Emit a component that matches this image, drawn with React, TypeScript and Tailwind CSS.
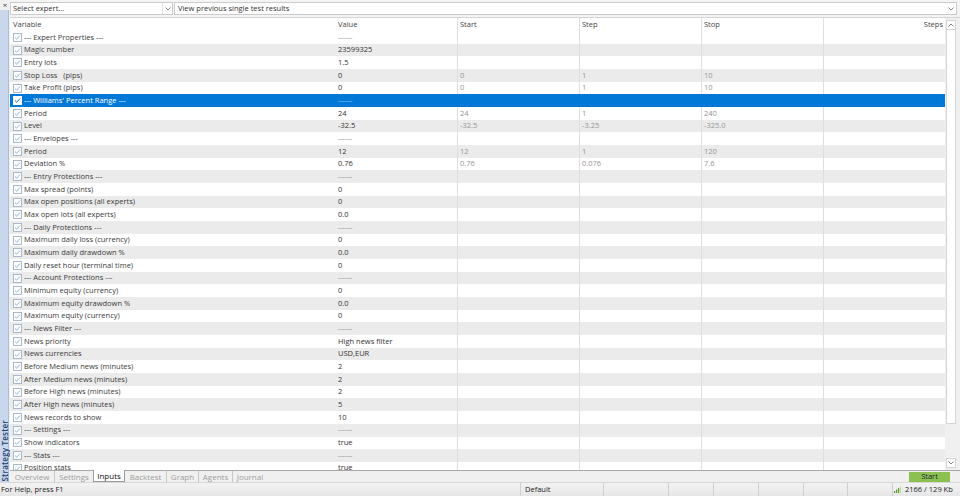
import React from "react";

type Row = { l: string; v: string; a?: string; s?: string; o?: string };

const rows: Row[] = [
  { l: "--- Expert Properties ---", v: "------" },
  { l: "Magic number", v: "23599325" },
  { l: "Entry lots", v: "1.5" },
  { l: "Stop Loss   (pips)", v: "0", a: "0", s: "1", o: "10" },
  { l: "Take Profit (pips)", v: "0", a: "0", s: "1", o: "10" },
  { l: "--- Williams' Percent Range ---", v: "------" },
  { l: "Period", v: "24", a: "24", s: "1", o: "240" },
  { l: "Level", v: "-32.5", a: "-32.5", s: "-3.25", o: "-325.0" },
  { l: "--- Envelopes ---", v: "------" },
  { l: "Period", v: "12", a: "12", s: "1", o: "120" },
  { l: "Deviation %", v: "0.76", a: "0.76", s: "0.076", o: "7.6" },
  { l: "--- Entry Protections ---", v: "------" },
  { l: "Max spread (points)", v: "0" },
  { l: "Max open positions (all experts)", v: "0" },
  { l: "Max open lots (all experts)", v: "0.0" },
  { l: "--- Daily Protections ---", v: "------" },
  { l: "Maximum daily loss (currency)", v: "0" },
  { l: "Maximum daily drawdown %", v: "0.0" },
  { l: "Daily reset hour (terminal time)", v: "0" },
  { l: "--- Account Protections ---", v: "------" },
  { l: "Minimum equity (currency)", v: "0" },
  { l: "Maximum equity drawdown %", v: "0.0" },
  { l: "Maximum equity (currency)", v: "0" },
  { l: "--- News Filter ---", v: "------" },
  { l: "News priority", v: "High news filter" },
  { l: "News currencies", v: "USD,EUR" },
  { l: "Before Medium news (minutes)", v: "2" },
  { l: "After Medium news (minutes)", v: "2" },
  { l: "Before High news (minutes)", v: "2" },
  { l: "After High news (minutes)", v: "5" },
  { l: "News records to show", v: "10" },
  { l: "--- Settings ---", v: "------" },
  { l: "Show indicators", v: "true" },
  { l: "--- Stats ---", v: "------" },
  { l: "Position stats", v: "true" },
];

function Check({ sel }: { sel: boolean }) {
  return (
    <svg width="9" height="9" viewBox="0 0 9 9" className="shrink-0">
      <rect x="0.5" y="0.5" width="8" height="8" fill="#ffffff" stroke={sel ? "#ffffff" : "#a6b8cf"} />
      <polyline points="2,4.6 3.7,6.2 7,2.6" fill="none" stroke={sel ? "#0a6fc6" : "#8fb2da"} strokeWidth="1" />
    </svg>
  );
}

function Chevron({ up }: { up?: boolean }) {
  return (
    <svg width="6" height="4" viewBox="0 0 6 4">
      <polyline points={up ? "0.5,3.5 3,1 5.5,3.5" : "0.5,0.5 3,3 5.5,0.5"} fill="none" stroke="#777" strokeWidth="0.9" />
    </svg>
  );
}

const cols = "grid grid-cols-[325px_122px_122px_122px_122px_122px]";

export default function App() {
  return (
    <div className="w-[960px] h-[496px] flex flex-col bg-[#f0f0f0] overflow-hidden font-['Open_Sans','Noto_Sans',sans-serif] text-[7.5px] leading-none text-[#333]">
      <div className="flex flex-1 min-h-0">
        {/* left strip */}
        <div className="w-[10px] flex flex-col shrink-0">
          <div className="h-[10px] flex items-center justify-center text-[8px] text-[#444]">×</div>
          <div className="flex-1 w-[9px] bg-[#c8d7eb] border-r border-[#a9bdd8] flex flex-col justify-end items-center pb-[1px] overflow-visible">
            <span className="[writing-mode:vertical-rl] rotate-180 font-semibold text-[#1d3f72] text-[8px] leading-[9px] tracking-[0.2px]">
              Strategy Tester
            </span>
          </div>
        </div>

        <div className="flex-1 flex flex-col min-w-0">
          {/* top bar */}
          <div className="h-[17px] flex items-center pr-[3px] bg-[#f4f4f4]">
            <div className="w-[163px] h-[13px] bg-white border border-[#cbcbcb] flex items-center">
              <span className="flex-1 pl-[2px] text-[#333]">Select expert...</span>
              <span className="w-[10px] h-full flex items-center justify-center border-l border-[#e2e2e2]">
                <Chevron />
              </span>
            </div>
            <div className="flex-1 ml-[1px] h-[13px] bg-white border border-[#cbcbcb] flex items-center">
              <span className="flex-1 pl-[3px] text-[#333]">View previous single test results</span>
              <span className="w-[10px] h-full flex items-center justify-center">
                <Chevron />
              </span>
            </div>
          </div>

          {/* table area */}
          <div className="flex-1 flex min-h-0 border-t border-[#d4d4d4]">
            <div className="w-[935px] flex flex-col bg-white overflow-hidden">
              <div className={`${cols} h-[13px] bg-white shrink-0 text-[#444]`}>
                <div className="flex items-center pl-[3px]">Variable</div>
                <div className="flex items-center pl-[3px]">Value</div>
                <div className="flex items-center pl-[2px] border-l border-[#e0e0e0]">Start</div>
                <div className="flex items-center pl-[2px] border-l border-[#e0e0e0]">Step</div>
                <div className="flex items-center pl-[2px] border-l border-[#e0e0e0]">Stop</div>
                <div className="flex items-center justify-end pr-[2px] border-l border-[#e0e0e0]">Steps</div>
              </div>
              {rows.map((r, i) => {
                const sel = i === 5;
                const gray = i % 2 === 1;
                const bg = sel ? "bg-[#0078d7]" : gray ? "bg-[#ebebeb]" : "bg-white";
                const dash = r.v === "------";
                const lineColor = sel ? "border-[#0078d7]" : "border-[#dedede]";
                return (
                  <div key={i} className={`${cols} h-[12.68px] shrink-0 ${bg}`}>
                    <div className="flex items-center pl-[3px] gap-[2px] min-w-0">
                      <Check sel={sel} />
                      <span className={`whitespace-pre ${sel ? "text-white" : "text-[#3a3a3a]"}`}>{r.l}</span>
                    </div>
                    <div
                      className={`flex items-center pl-[3px] ${
                        sel ? "text-[#a9d0f5]" : dash ? "text-[#8a8a8a]" : "text-[#333]"
                      }`}
                    >
                      {r.v}
                    </div>
                    <div className={`flex items-center pl-[2px] border-l ${lineColor} text-[#959595]`}>{r.a ?? ""}</div>
                    <div className={`flex items-center pl-[2px] border-l ${lineColor} text-[#959595]`}>{r.s ?? ""}</div>
                    <div className={`flex items-center pl-[2px] border-l ${lineColor} text-[#959595]`}>{r.o ?? ""}</div>
                    <div className={`border-l ${lineColor}`}></div>
                  </div>
                );
              })}
            </div>
            {/* scrollbar */}
            <div className="w-[12px] flex flex-col bg-[#f0f0f0] pt-[2px] pb-[2px] pl-[1px]">
              <div className="h-[10px] w-[10px] flex items-center justify-center bg-white border border-[#d6d6d6]">
                <Chevron up />
              </div>
              <div className="h-[394px] w-[10px] bg-white border border-[#d6d6d6] border-t-0"></div>
              <div className="flex-1"></div>
              <div className="h-[10px] w-[10px] flex items-center justify-center bg-white border border-[#d6d6d6]">
                <Chevron />
              </div>
            </div>
            <div className="w-[3px] bg-[#f0f0f0]"></div>
          </div>

          {/* tabs bar */}
          <div className="h-[12px] flex items-center border-t border-[#a8a8a8] bg-[#f0f0f0]">
            {[
              ["Overview", "w-[44px]"],
              ["Settings", "w-[39px]"],
              ["Inputs", "w-[32px]"],
              ["Backtest", "w-[41px]"],
              ["Graph", "w-[32px]"],
              ["Agents", "w-[34px]"],
              ["Journal", "w-[35px]"],
            ].map(([t, w], i) => {
              const active = t === "Inputs";
              return (
                <div
                  key={t}
                  className={`${w} flex items-center justify-center ${
                    active
                      ? "bg-white border-x border-b border-[#9a9a9a] text-[#111] text-[8px] -mt-[1px] h-[12px]"
                      : `h-[11px] text-[#9e9e9e] text-[8px] ${i !== 0 && i !== 3 ? "border-l border-[#c8c8c8]" : ""}`
                  }`}
                >
                  {t}
                </div>
              );
            })}
            <div className="flex-1"></div>
            <div className="w-[41px] h-[10px] mr-[10px] bg-[#8cc152] flex items-center justify-center text-[#223] text-[7.5px]">
              Start
            </div>
          </div>
        </div>
      </div>

      {/* status bar */}
      <div className="h-[14px] flex items-center border-t border-[#d6d6d6] bg-gradient-to-b from-[#f3f3f3] to-[#e6e6e6] text-[#222]">
        <div className="w-[520px] pl-[1px]">For Help, press F1</div>
        <div className="w-[83px] h-full flex items-center pl-[4px] border-l border-[#cfcfcf]">Default</div>
        <div className="w-[65px] h-full border-l border-[#cfcfcf]"></div>
        <div className="w-[45px] h-full border-l border-[#cfcfcf]"></div>
        <div className="w-[45px] h-full border-l border-[#cfcfcf]"></div>
        <div className="w-[45px] h-full border-l border-[#cfcfcf]"></div>
        <div className="w-[44px] h-full border-l border-[#cfcfcf]"></div>
        <div className="w-[45px] h-full border-l border-[#cfcfcf]"></div>
        <div className="w-[68px] h-full flex items-center pl-[1px] gap-[4px] border-l border-[#cfcfcf]">
          <svg width="7" height="7" viewBox="0 0 7 7">
            <rect x="0" y="5" width="1.2" height="2" fill="#5aa02c" />
            <rect x="2" y="3.5" width="1.2" height="3.5" fill="#5aa02c" />
            <rect x="4" y="2" width="1.2" height="5" fill="#5aa02c" />
            <rect x="6" y="0.5" width="1" height="6.5" fill="#b8d8a0" />
          </svg>
          <span>2166 / 129 Kb</span>
        </div>
      </div>
    </div>
  );
}
